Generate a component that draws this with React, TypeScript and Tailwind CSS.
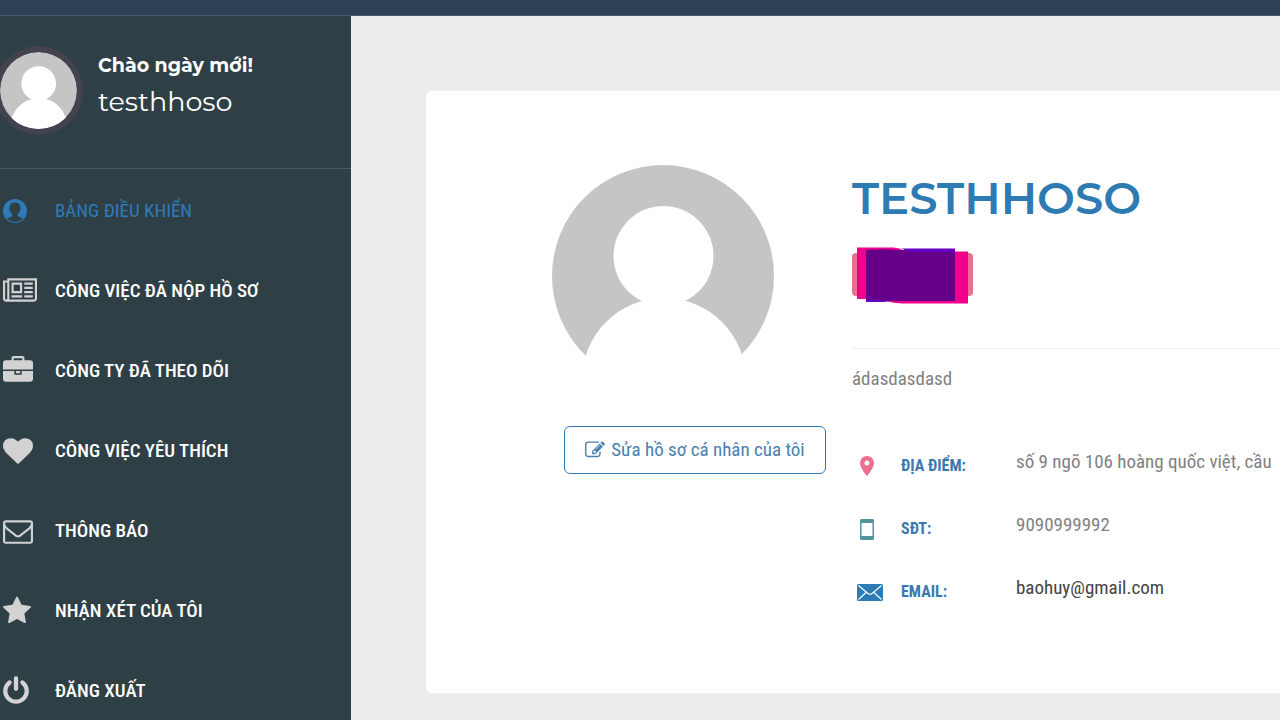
import type { ReactNode } from "react";

type IconProps = { d: string; viewBox?: string; className?: string };

function Icon({ d, viewBox = "0 0 1792 1792", className = "" }: IconProps) {
  return (
    <svg viewBox={viewBox} fill="currentColor" aria-hidden="true" className={className}>
      <path d={d} />
    </svg>
  );
}

const NEWSPAPER =
  "M1024 512h-384v384h384v-384zm128 640v128h-640v-128h640zm0-768v640h-640v-640h640zm640 768v128h-512v-128h512zm0-256v128h-512v-128h512zm0-256v128h-512v-128h512zm0-256v128h-512v-128h512zm-1536 960v-960h-128v960q0 26 19 45t45 19 45-19 19-45zm1664 0v-1088h-1536v1088q0 33-11 64h1483q26 0 45-19t19-45zm128-1216v1216q0 80-56 136t-136 56h-1664q-80 0-136-56t-56-136v-1088h256v-128h1792z";
const BRIEFCASE =
  "M640 256h512v-128h-512v128zm1152 640v480q0 66-47 113t-113 47h-1472q-66 0-113-47t-47-113v-480h672v160q0 26 19 45t45 19h320q26 0 45-19t19-45v-160h672zm-768 0v128h-256v-128h256zm768-480v384h-1792v-384q0-66 47-113t113-47h352v-160q0-40 28-68t68-28h576q40 0 68 28t28 68v160h352q66 0 113 47t47 113z";
const HEART =
  "M896 1664q-26 0-44-18l-624-602q-10-8-27.500-26t-55.500-65.500-68-97.500-53.500-121-23.500-138q0-220 127-344t351-124q62 0 126.500 21.500t120 58 95.500 68.500 76 68q36-36 76-68t95.500-68.500 120-58 126.500-21.500q224 0 351 124t127 344q0 221-229 450l-623 600q-18 18-44 18z";
const ENVELOPE_OUTLINE =
  "M1664 1504v-768q-32 36-69 66-268 206-426 338-51 43-83 67t-86.500 48.500-102.500 24.500h-2q-48 0-102.500-24.500t-86.500-48.500-83-67q-158-132-426-338-37-30-69-66v768q0 13 9.500 22.500t22.500 9.500h1472q13 0 22.500-9.500t9.500-22.500zm0-1051v-24.500l-.5-13-3-12.500-5.500-9-9-7.500-14-2.500h-1472q-13 0-22.500 9.500t-9.500 22.500q0 168 147 284 193 152 401 317 6 5 35 29.500t46 37.500 44.500 31.500 50.500 27.500 43 9h2q20 0 43-9t50.500-27.500 44.500-31.500 46-37.500 35-29.500q208-165 401-317 54-43 100.500-115.500t46.500-131.500zm128-37v1088q0 66-47 113t-113 47h-1472q-66 0-113-47t-47-113v-1088q0-66 47-113t113-47h1472q66 0 113 47t47 113z";
const STAR =
  "M1728 647q0 22-26 48l-363 354 86 500q1 7 1 20 0 21-10.500 35.500t-30.500 14.500q-19 0-40-12l-449-236-449 236q-22 12-40 12-21 0-31.500-14.500t-10.500-35.500q0-6 2-20l86-500-364-354q-25-27-25-48 0-37 56-46l502-73 225-455q19-41 49-41t49 41l225 455 502 73q56 9 56 46z";
const POWER =
  "M1664 896q0 156-61 298t-164 245-245 164-298 61-298-61-245-164-164-245-61-298q0-182 80.500-343t226.500-270q43-32 95.500-25t83.500 50q32 42 24.500 94.500t-49.500 84.500q-98 74-151.500 181t-53.500 228q0 104 40.500 198.500t109.500 163.500 163.500 109.500 198.500 40.500 198.500-40.500 163.500-109.500 109.500-163.500 40.500-198.500q0-121-53.500-228t-151.500-181q-42-32-49.500-84.500t24.500-94.500q31-43 84-50t95 25q146 109 226.500 270t80.500 343zm-640-768v640q0 52-38 90t-90 38-90-38-38-90v-640q0-52 38-90t90-38 90 38 38 90z";
const PENCIL_SQUARE =
  "M888 1184l116-116-152-152-116 116v56h96v96h56zm440-720q-16-16-33 1l-350 350q-17 17-1 33t33-1l350-350q17-17 1-33zm80 594v190q0 119-84.500 203.500t-203.500 84.500h-832q-119 0-203.500-84.500t-84.500-203.500v-832q0-119 84.500-203.500t203.500-84.500h832q63 0 117 25 15 7 18 23 3 17-9 29l-49 49q-14 14-32 8-23-6-45-6h-832q-66 0-113 47t-47 113v832q0 66 47 113t113 47h832q66 0 113-47t47-113v-126q0-13 9-22l64-64q15-15 35-7t20 29zm-96-738l288 288-672 672h-288v-288zm444 132l-92 92-288-288 92-92q28-28 68-28t68 28l152 152q28 28 28 68t-28 68z";

function ContactIcon() {
  return (
    <svg viewBox="0 0 24 24" fill="currentColor" aria-hidden="true" className="size-6">
      <path
        fillRule="evenodd"
        d="M12 0a12 12 0 1 1 0 24 12 12 0 0 1 0-24zM12 3.500c-3.600 0-5.700 2.200-5.500 5.400 0 .8-.3 1.300 0 2.100.2.700.7.900 1 1.500.4 1 .8 1.700 1.500 2.500.4.700.3 2-.3 2.600-1.400.8-3.300 1-4.700 2.100C6 21.700 8.900 22.900 12 22.900s6-1.200 8-3.200c-1.400-1.100-3.300-1.300-4.700-2.100-.6-.6-.7-1.900-.3-2.600.7-.8 1.100-1.500 1.500-2.500.3-.6.8-.8 1-1.500.3-.8 0-1.300 0-2.100.2-3.200-1.900-5.400-5.500-5.400z"
      />
    </svg>
  );
}

function Avatar({ className }: { className: string }) {
  return (
    <svg viewBox="0 0 222 222" role="img" aria-label="testhhoso" className={className}>
      <circle cx="111" cy="111" r="111" fill="#c5c5c5" />
      <circle cx="111.500" cy="91" r="50" fill="#fff" />
      <circle cx="112" cy="215" r="82" fill="#fff" />
    </svg>
  );
}

type NavItem = { label: string; icon: ReactNode; active?: boolean };

const navItems: NavItem[] = [
  { label: "BẢNG ĐIỀU KHIỂN", icon: <ContactIcon />, active: true },
  { label: "CÔNG VIỆC ĐÃ NỘP HỒ SƠ", icon: <Icon d={NEWSPAPER} viewBox="0 0 2048 1792" className="h-[30px] w-[34px]" /> },
  { label: "CÔNG TY ĐÃ THEO DÕI", icon: <Icon d={BRIEFCASE} className="size-[30px]" /> },
  { label: "CÔNG VIỆC YÊU THÍCH", icon: <Icon d={HEART} className="size-[30px]" /> },
  { label: "THÔNG BÁO", icon: <Icon d={ENVELOPE_OUTLINE} className="size-[30px]" /> },
  { label: "NHẬN XÉT CỦA TÔI", icon: <Icon d={STAR} viewBox="64 0 1664 1792" className="h-[30px] w-7" /> },
  { label: "ĐĂNG XUẤT", icon: <Icon d={POWER} viewBox="128 0 1536 1792" className="h-[30px] w-[26px]" /> },
];

const details = [
  {
    label: "ĐỊA ĐIỂM:",
    value: "số 9 ngõ 106 hoàng quốc việt, cầu",
    color: "text-[#818181]",
    icon: (
      <svg viewBox="0 0 14 20" aria-hidden="true" className="mx-[3px] h-5 w-3.5 text-[#ec6f8b]" fill="currentColor">
        <path fillRule="evenodd" d="M7 0a7 7 0 0 1 7 7c0 5-7 13-7 13S0 12 0 7a7 7 0 0 1 7-7zm0 4.500a2.500 2.500 0 1 0 0 5 2.500 2.500 0 0 0 0-5z" />
      </svg>
    ),
  },
  {
    label: "SĐT:",
    value: "9090999992",
    color: "text-[#818181]",
    icon: (
      <svg viewBox="0 0 14 21" aria-hidden="true" className="mx-[3px] h-[21px] w-3.5 text-[#52959a]" fill="currentColor">
        <path fillRule="evenodd" d="M1.500 0h11A1.500 1.500 0 0 1 14 1.500v18a1.500 1.500 0 0 1-1.500 1.500h-11A1.500 1.500 0 0 1 0 19.500v-18A1.500 1.500 0 0 1 1.500 0zM1.500 4v13h11V4z" />
      </svg>
    ),
  },
  {
    label: "EMAIL:",
    value: "baohuy@gmail.com",
    color: "text-[#444444]",
    icon: (
      <svg viewBox="0 0 26 17" aria-hidden="true" className="h-[17px] w-[26px]">
        <rect width="26" height="17" rx="1.500" fill="#2e7bb3" />
        <path d="M1.500 1.500 11 9.500q2 1.600 4 0L24.500 1.500M1.500 15.500 9 8.500M24.500 15.500 17 8.500" fill="none" stroke="#fff" strokeWidth="1.100" />
      </svg>
    ),
  },
];

function Sidebar() {
  return (
    <aside className="w-[351px] shrink-0 bg-[#2f3f46]">
      <div className="flex h-[153px] items-start overflow-hidden border-b border-[#4a5b63] pt-[30px]">
        <div className="-ml-1.5 shrink-0 rounded-full bg-[#43434f] p-1.5">
          <Avatar className="size-[77px] rounded-full" />
        </div>
        <div className="ml-[15px] pt-1 font-['Montserrat',sans-serif] text-white">
          <p className="text-[19px] leading-8 font-bold">Chào ngày mới!</p>
          <p className="text-[27px] leading-10">testhhoso</p>
        </div>
      </div>
      <nav className="pt-0.5">
        <ul>
          {navItems.map((item) => (
            <li key={item.label}>
              <a
                href="#"
                className={
                  item.active
                    ? "flex h-20 items-center pl-[3px] text-[19px] text-[#2e7bb8]"
                    : "flex h-20 items-center pl-[3px] text-[19px] font-medium text-white"
                }
              >
                <span className={item.active ? "w-[52px]" : "w-[52px] text-[#d2d2d2]"}>{item.icon}</span>
                {item.label}
              </a>
            </li>
          ))}
        </ul>
      </nav>
    </aside>
  );
}

function StatusBadge() {
  return (
    <svg viewBox="0 0 121 57" aria-hidden="true" className="mt-[26px] h-[57px] w-[121px]">
      <rect x="0" y="6" width="121" height="43" rx="4" fill="#e8718d" />
      <path d="M5 .5h36q6 .5 9 2v2h66v52H50q-9-.5-16-2.500l-8-2H5z" fill="#f2008b" />
      <path d="M14 3q18-1.500 30 0h59v51H14z" fill="#66008a" />
      <path d="M49 1.500h54v3.500H62q-7-.5-13-3.500z" fill="#6400c4" />
      <path d="M14 52.500h12l12 1.500-6 1H14z" fill="#6400c4" />
    </svg>
  );
}

export default function App() {
  return (
    <div className="flex min-h-screen flex-col overflow-x-hidden bg-[#ededed] font-['Roboto_Condensed',sans-serif]">
      <header className="h-4 border-b border-[#4a5c6c] bg-[#2f4156]" />
      <div className="flex flex-1">
        <Sidebar />
        <main className="min-w-0 flex-1 pt-[75px] pl-[75px]">
          <section className="flex rounded-l-md bg-white pt-[74px] pb-[84px] pl-[126px]">
            <div className="w-[300px] shrink-0">
              <Avatar className="size-[222px]" />
              <button
                type="button"
                className="mt-[39px] ml-3 flex h-12 w-[262px] items-center justify-center gap-1.5 rounded-md border border-[#2e7bb3] text-[19px] text-[#4a80ad]"
              >
                <Icon d={PENCIL_SQUARE} className="size-5" />
                Sửa hồ sơ cá nhân của tôi
              </button>
            </div>
            <div className="min-w-0 flex-1 pt-2.5">
              <h1 className="font-['Montserrat',sans-serif] text-[45px] leading-[46px] font-semibold text-[#2e7bb3]">TESTHHOSO</h1>
              <StatusBadge />
              <p className="mt-11 border-t border-[#f2f2f2] pt-4 text-[19px] leading-7 text-[#818181]">ádasdasdasd</p>
              <dl className="mt-14 flex flex-col gap-[29px]">
                {details.map((item) => (
                  <div key={item.label} className="flex">
                    <dt className="flex h-[34px] w-[164px] shrink-0 items-center text-[16px] font-bold text-[#3a78b0]">
                      <span className="flex w-[49px] pl-[5px]">{item.icon}</span>
                      {item.label}
                    </dt>
                    <dd className={`text-[19px] leading-[26px] whitespace-nowrap ${item.color}`}>{item.value}</dd>
                  </div>
                ))}
              </dl>
            </div>
          </section>
        </main>
      </div>
    </div>
  );
}
